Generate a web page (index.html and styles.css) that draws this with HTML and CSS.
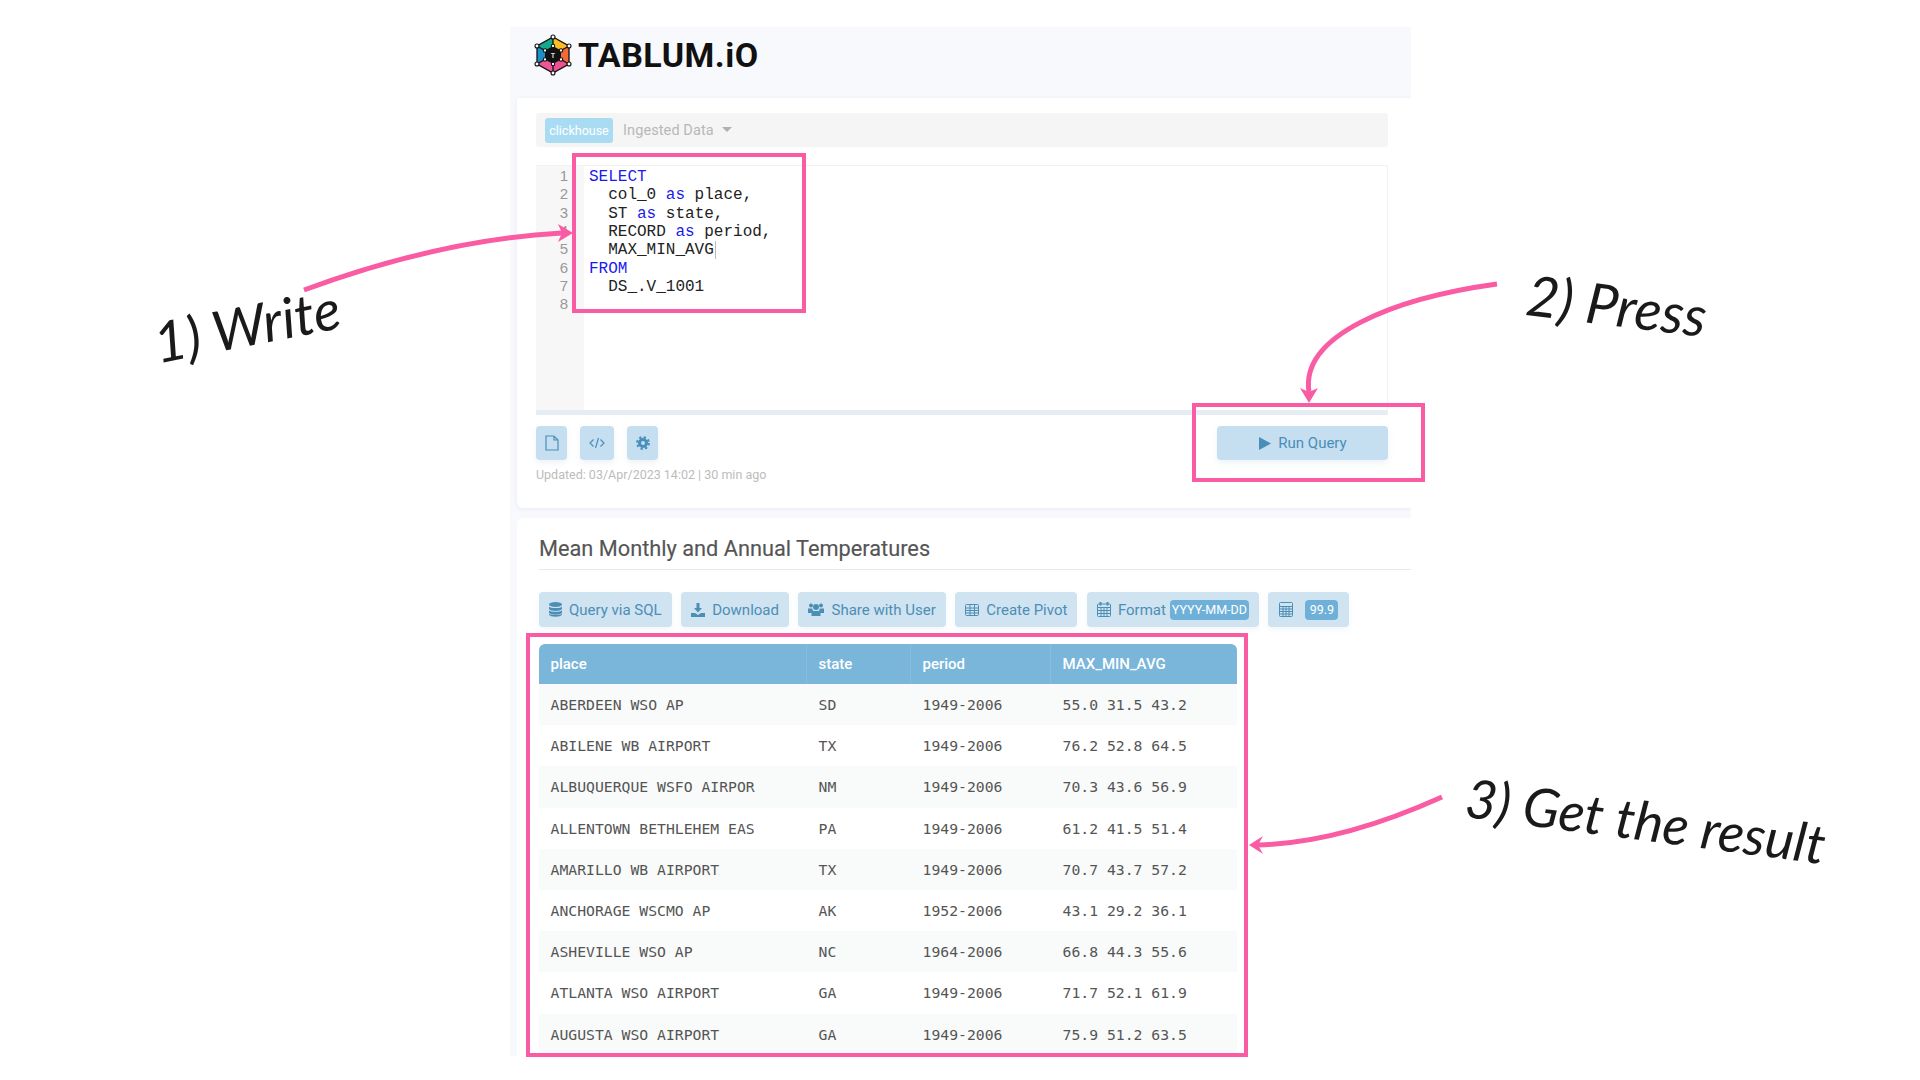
FILE: index.html
```html
<!DOCTYPE html>
<html lang="en">
<head>
<meta charset="utf-8">
<title>Tablum.io</title>
<link rel="stylesheet" href="styles.css">
</head>
<body>
<main class="panel">
  <header class="brand">
    <svg class="logo" width="40" height="44" viewBox="-20 -22 40 44">
      <polygon points="0,-18 -16,-9 0,0" fill="#12a98c"/>
      <polygon points="0,-18 16,-9 0,0" fill="#fbbd23"/>
      <polygon points="16,-9 16,9 0,0" fill="#f3693a"/>
      <polygon points="16,9 0,18 0,0" fill="#ee4f93"/>
      <polygon points="-16,9 0,18 0,0" fill="#f0559a"/>
      <polygon points="-16,-9 -16,9 0,0" fill="#1b8fca"/>
      <g stroke="#111" stroke-width="1.3" fill="none">
        <polygon points="0,-18 16,-9 16,9 0,18 -16,9 -16,-9"/>
        <path d="M0-18V18M-16-9L16 9M16-9L-16 9"/>
      </g>
      <polygon points="0,-9 8,-4.5 8,4.5 0,9 -8,4.5 -8,-4.5" fill="#111"/>
      <text class="logo-t" x="0" y="2.5" text-anchor="middle">T</text>
      <g fill="#fff" stroke="#111" stroke-width="1.1">
        <circle cx="0" cy="-18" r="2"/><circle cx="16" cy="-9" r="2"/><circle cx="16" cy="9" r="2"/>
        <circle cx="0" cy="18" r="2"/><circle cx="-16" cy="9" r="2"/><circle cx="-16" cy="-9" r="2"/>
        <circle cx="0" cy="-9" r="1.7"/><circle cx="8" cy="-4.5" r="1.7"/><circle cx="8" cy="4.5" r="1.7"/>
        <circle cx="0" cy="9" r="1.7"/><circle cx="-8" cy="4.5" r="1.7"/><circle cx="-8" cy="-4.5" r="1.7"/>
      </g>
    </svg>
    <span class="brand-name">TABLUM.iO</span>
  </header>

  <section class="card card-query">
    <div class="source-bar">
      <span class="source-badge">clickhouse</span>
      <span class="source-name">Ingested Data</span>
      <span class="caret"></span>
    </div>
    <div class="editor">
      <div class="gutter">
        <div>1</div><div>2</div><div>3</div><div>4</div><div>5</div><div>6</div><div>7</div><div>8</div>
      </div>
<pre class="code"><span class="kw">SELECT</span>
  col_0 <span class="kw">as</span> place,
  ST <span class="kw">as</span> state,
  RECORD <span class="kw">as</span> period,
  MAX_MIN_AVG<span class="cursor"></span>
<span class="kw">FROM</span>
  DS_.V_1001
</pre>
    </div>
    <div class="editor-actions">
      <div class="tool-group">
        <button class="tool tool-file">
          <svg class="icon" width="14" height="16" viewBox="0 0 14 16" fill="none" stroke="currentColor" stroke-width="1.2"><path d="M1 1h8l4 4v10H1zM9 1v4h4"/></svg>
        </button>
        <button class="tool tool-code">
          <svg class="icon" width="16" height="12" viewBox="0 0 16 12" fill="none" stroke="currentColor" stroke-width="1.2"><path d="M4.500 2.500L1 6l3.500 3.500M11.500 2.500L15 6l-3.500 3.500M9.500 1L6.500 11"/></svg>
        </button>
        <button class="tool tool-gear">
          <svg class="icon" width="14" height="14" viewBox="0 0 14 14" fill="none" stroke="currentColor"><circle cx="7" cy="7" r="3.500" stroke-width="3"/><circle cx="7" cy="7" r="5.800" stroke-width="2.200" stroke-dasharray="2.300 2.250"/></svg>
        </button>
      </div>
      <button class="run">
        <svg class="icon" width="12" height="13" viewBox="0 0 12 13"><polygon points="0,0 12,6.500 0,13" fill="currentColor"/></svg>
        Run Query
      </button>
    </div>
    <p class="updated">Updated: 03/Apr/2023 14:02 | 30 min ago</p>
  </section>

  <section class="card card-result">
    <h1 class="result-title">Mean Monthly and Annual Temperatures</h1>
    <div class="result-actions">
      <button class="action">
        <svg class="icon" width="13" height="15" viewBox="0 0 13 15" fill="currentColor"><ellipse cx="6.500" cy="2.500" rx="6.500" ry="2.500"/><path d="M0 4.500c1 2 12 2 13 0v2.500c-1 2.500-12 2.500-13 0zM0 8.300c1 2 12 2 13 0v2.500c-1 2.500-12 2.500-13 0zM0 11.600c1 2 12 2 13 0v1c-1 3-12 3-13 0z"/></svg>
        Query via SQL
      </button>
      <button class="action">
        <svg class="icon" width="14" height="14" viewBox="0 0 14 14" fill="currentColor"><path d="M5.500 0h3v5h2.500L7 9.500 3 5h2.500zM0 10h4l3 2 3-2h4v4H0z"/></svg>
        Download
      </button>
      <button class="action">
        <svg class="icon" width="16" height="13" viewBox="0 0 16 13" fill="currentColor"><circle cx="3" cy="2.500" r="2"/><circle cx="13" cy="2.500" r="2"/><circle cx="8" cy="4" r="3"/><path d="M0 5.500h4l1 2-1.500 2.500H0zM16 5.500h-4l-1 2 1.500 2.500H16zM4.500 8h7l1 2v3h-9v-3z"/></svg>
        Share with User
      </button>
      <button class="action">
        <svg class="icon" width="14" height="12" viewBox="0 0 14 12" fill="none" stroke="currentColor"><rect x=".5" y=".5" width="13" height="11" rx="1"/><path d="M.5 4h13M.5 6.500h13M.5 9h13M5 1v10M9.500 1v10"/></svg>
        Create Pivot
      </button>
      <button class="action">
        <svg class="icon" width="14" height="15" viewBox="0 0 14 15" fill="none" stroke="currentColor"><rect x=".5" y="2" width="13" height="12.500" rx="1"/><path d="M.5 5.500h13M.5 8.500h13M.5 11.500h13M4 5.500v9M7 5.500v9M10 5.500v9"/><path d="M3.500 0v3.500M10.500 0v3.500" stroke-width="2"/></svg>
        Format
        <span class="pill pill-format">YYYY-MM-DD</span>
      </button>
      <button class="action action-calc">
        <svg class="icon" width="14" height="15" viewBox="0 0 14 15" fill="none" stroke="currentColor"><rect x=".5" y=".5" width="13" height="14" rx="1"/><path d="M.5 4.500h13M.5 7h13M.5 9.500h13M.5 12h13M4 4.500v10M7 4.500v10M10 4.500v10"/></svg>
        <span class="pill pill-num">99.9</span>
      </button>
    </div>
    <table class="grid">
      <colgroup><col class="col-place"><col class="col-state"><col class="col-period"><col class="col-value"></colgroup>
      <thead><tr><th>place</th><th>state</th><th>period</th><th>MAX_MIN_AVG</th></tr></thead>
      <tbody>
        <tr><td>ABERDEEN WSO AP</td><td>SD</td><td>1949-2006</td><td>55.0 31.5 43.2</td></tr>
        <tr><td>ABILENE WB AIRPORT</td><td>TX</td><td>1949-2006</td><td>76.2 52.8 64.5</td></tr>
        <tr><td>ALBUQUERQUE WSFO AIRPOR</td><td>NM</td><td>1949-2006</td><td>70.3 43.6 56.9</td></tr>
        <tr><td>ALLENTOWN BETHLEHEM EAS</td><td>PA</td><td>1949-2006</td><td>61.2 41.5 51.4</td></tr>
        <tr><td>AMARILLO WB AIRPORT</td><td>TX</td><td>1949-2006</td><td>70.7 43.7 57.2</td></tr>
        <tr><td>ANCHORAGE WSCMO AP</td><td>AK</td><td>1952-2006</td><td>43.1 29.2 36.1</td></tr>
        <tr><td>ASHEVILLE WSO AP</td><td>NC</td><td>1964-2006</td><td>66.8 44.3 55.6</td></tr>
        <tr><td>ATLANTA WSO AIRPORT</td><td>GA</td><td>1949-2006</td><td>71.7 52.1 61.9</td></tr>
        <tr><td>AUGUSTA WSO AIRPORT</td><td>GA</td><td>1949-2006</td><td>75.9 51.2 63.5</td></tr>
      </tbody>
    </table>
  </section>
</main>

<div class="frame frame-code"></div>
<div class="frame frame-run"></div>
<div class="frame frame-table"></div>

<svg class="arrows" width="1920" height="1080" viewBox="0 0 1920 1080">
  <g fill="none" stroke="#fa5ca4" stroke-width="5">
    <path d="M304 290C380 262 470 238 562 233"/>
    <path d="M1497 284C1395 298 1300 335 1309 392"/>
    <path d="M1442 797Q1340 843 1258 845"/>
  </g>
  <g fill="#fa5ca4">
    <polygon points="573,233 558,224 562,233 558,242"/>
    <polygon points="1309,403 1300,388 1309,392 1318,388"/>
    <polygon points="1249,845 1263,836 1258,845 1263,854"/>
  </g>
</svg>

<div class="note note-write">1) Write</div>
<div class="note note-press">2) Press</div>
<div class="note note-result">3) Get the result</div>
</body>
</html>
```

FILE: styles.css
```css
* { box-sizing: border-box; }
html, body { margin: 0; height: 1080px; background: #fff; overflow: hidden; }
body { font-family: Roboto, "Liberation Sans", sans-serif; color: #555; position: relative; padding-top: 27px; padding-left: 510px; }
button { font-family: inherit; border: 0; }

.panel { width: 901px; height: 1029px; background: #f8f9fd; display: flex; flex-direction: column; overflow: hidden; }
.brand { height: 71px; flex: none; display: flex; align-items: center; padding: 0 0 16px 23px; gap: 5px; }
.logo { flex: none; }
.logo-t { font: 700 7px Roboto, sans-serif; fill: #ddd; }
.brand-name { font: 700 34px Roboto, sans-serif; color: #111; letter-spacing: .5px; }

.card { background: #fff; margin-left: 7px; flex: none; }
.card-query { height: 410px; padding: 15px 23px 0 19px; border-bottom-left-radius: 6px; box-shadow: 0 1px 4px rgba(90,100,140,.1); }
.card-result { flex: 1; margin-top: 10px; padding-left: 22px; border-top-left-radius: 6px; }

.source-bar { height: 34px; background: #f5f5f5; border-radius: 3px; display: flex; align-items: center; padding-left: 9px; }
.source-badge { width: 68px; height: 25px; background: #a9dcf3; border-radius: 3px; color: #fff; font-size: 12.500px; line-height: 26px; text-align: center; }
.source-name { margin-left: 10px; font-size: 14.500px; color: #b8b8b8; letter-spacing: .1px; }
.caret { margin-left: 8px; margin-top: -2px; border: 5px solid transparent; border-top-color: #b0b0b0; border-bottom: 0; }

.editor { margin-top: 18px; height: 250px; display: flex; border-top: 1px solid #f2f2f2; border-right: 1px solid #f2f2f2; border-bottom: 5px solid #e6ecf3; }
.gutter { width: 48px; flex: none; background: #f7f7f7; padding: 1px 16px 0 0; text-align: right; font: 15px/18.350px "Liberation Sans", sans-serif; color: #999; }
.code { margin: 0; padding: 2px 0 0 5px; font: 16px/18.350px "Liberation Mono", monospace; color: #222; }
.kw { color: #1a1aee; }
.cursor { display: inline-block; width: 1px; height: 18px; background: #bbb; vertical-align: top; margin-left: 1px; }

.editor-actions { margin-top: 11px; display: flex; justify-content: space-between; }
.tool-group { display: flex; gap: 13px; }
.tool { height: 34px; width: 31px; padding: 0; background: #c5dff0; border-radius: 4px; color: #4a8fbb; display: flex; align-items: center; justify-content: center; box-shadow: 0 3px 6px rgba(90,140,180,.1); }
.tool-code { width: 34px; }
.run { width: 171px; height: 34px; background: #c5dff0; border-radius: 4px; color: #4a8dba; font-size: 15px; display: flex; align-items: center; justify-content: center; gap: 7px; box-shadow: 0 3px 6px rgba(90,140,180,.1); padding: 0 0 0 1px; }
.updated { margin: 7px 0 0; font-size: 12.500px; line-height: 16px; color: #bcbcbc; }

.result-title { margin: 0; height: 52px; border-bottom: 1px solid #e8e8e8; font-size: 21.750px; font-weight: 400; line-height: 62px; color: #555; white-space: nowrap; -webkit-text-stroke: .15px #555; }
.result-actions { margin-top: 22px; display: flex; gap: 9.500px; align-items: flex-start; }
.action { height: 35px; padding: 0 10px; background: #cfe3f0; border-radius: 4px; color: #4d8eb6; font-size: 15px; display: flex; align-items: center; gap: 7px; white-space: nowrap; box-shadow: 0 3px 6px rgba(90,140,180,.08); }
.pill { background: #6fb0d8; color: #fff; border-radius: 4px; height: 20px; line-height: 20px; font-size: 12.500px; text-align: center; }
.pill-format { width: 79px; margin-left: -3px; }
.pill-num { width: 33px; margin-left: 5px; }
.action-calc { padding-left: 11px; padding-right: 11px; }

.grid { margin-top: 17px; width: 698px; table-layout: fixed; border-collapse: separate; border-spacing: 0; }
.col-place { width: 268px; }
.col-state { width: 104px; }
.col-period { width: 140px; }
.col-value { width: 186px; }
.grid th { height: 40px; background: #7ab5da; color: #fff; font-size: 15px; font-weight: 500; text-align: left; padding: 0 0 0 11.500px; border-right: 1px solid #86bcdd; }
.grid th:first-child { border-top-left-radius: 6px; }
.grid th:last-child { border-top-right-radius: 6px; border-right: 0; }
.grid td { height: 41.200px; padding: 0 0 0 11.500px; font: 14.750px "DejaVu Sans Mono", monospace; color: #555; white-space: nowrap; overflow: hidden; }
.grid tbody tr:nth-child(odd) td { background: #f9fbfa; }

.frame { position: absolute; border: 4px solid #fa5ca4; }
.frame-code { left: 572px; top: 153px; width: 234px; height: 160px; }
.frame-run { left: 1192px; top: 403px; width: 233px; height: 79px; }
.frame-table { left: 526px; top: 633px; width: 722px; height: 424px; }

.arrows { position: absolute; left: 0; top: 0; pointer-events: none; }

.note { position: absolute; font-family: Lato, sans-serif; font-style: italic; font-size: 56px; line-height: 1; color: #1a1a1a; white-space: nowrap; transform-origin: left center; }
.note-write { left: 154px; top: 315px; transform: rotate(-11deg); }
.note-press { left: 1527px; top: 266px; transform: rotate(7deg); }
.note-result { left: 1466px; top: 770px; font-size: 54px; transform: rotate(7.500deg); }
```
